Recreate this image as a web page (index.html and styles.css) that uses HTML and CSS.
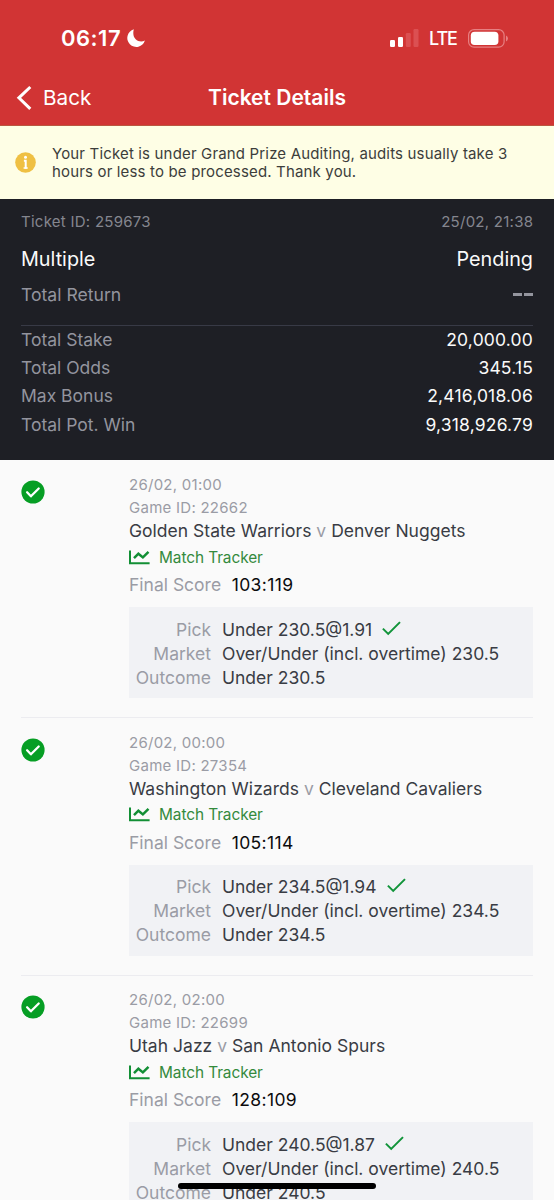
FILE: index.html
```html
<!DOCTYPE html>
<html lang="en">
<head>
<meta charset="utf-8">
<title>Ticket Details</title>
<link rel="stylesheet" href="styles.css">
</head>
<body>
<svg class="defs" width="0" height="0">
  <symbol id="won" viewBox="0 0 24 24"><circle cx="12" cy="12" r="11.6" fill="#069e24"/><path d="M6.1 12.3l3.8 4L17.7 8.5" fill="none" stroke="#fff" stroke-width="2.3" stroke-linecap="round" stroke-linejoin="round"/></symbol>
  <symbol id="chart" viewBox="0 0 21 15"><path d="M1 .6v12.7h19.6" fill="none" stroke="#128f35" stroke-width="2"/><path d="M5 8.2l4.4-4.5 4.5 3.7 5.6-5.5" fill="none" stroke="#128f35" stroke-width="2.5"/></symbol>
  <symbol id="tick" viewBox="0 0 19 15"><path d="M.9 7.6l5.3 5.3L18 1.1" fill="none" stroke="#12943a" stroke-width="2"/></symbol>
</svg>
<div class="screen">
  <header class="top">
    <div class="status">
      <span class="clock">06:17</span>
      <svg class="moon" viewBox="0 0 18 18"><path d="M6.8.3A9 9 0 1 0 17.9 11.6C12 14.5 4.2 10 6.8.3z" fill="#fff"/></svg>
      <svg class="signal" viewBox="0 0 29 18"><rect x="0" y="11" width="5" height="7" rx="1.2" fill="#fff"/><rect x="8" y="8" width="5" height="10" rx="1.2" fill="#fff"/><rect x="15.8" y="4" width="5" height="14" rx="1.2" fill="#db5052"/><rect x="23.5" y="0" width="5" height="18" rx="1.2" fill="#db5052"/></svg>
      <span class="lte">LTE</span>
      <svg class="battery" viewBox="0 0 41 19"><rect x=".6" y=".6" width="35.5" height="17.6" rx="5.5" fill="none" stroke="#e78082" stroke-width="1.2"/><rect x="2.8" y="2.8" width="27.6" height="13.2" rx="3.8" fill="#fff"/><path d="M38 6.4q2 1 2 3t-2 3z" fill="#e78082"/></svg>
    </div>
    <nav class="nav">
      <a class="back"><svg class="chevron" viewBox="0 0 16 26"><path d="M14.3 2L2.9 12.8 14.3 23.8" fill="none" stroke="#fff" stroke-width="3"/></svg><span>Back</span></a>
      <h1 class="title">Ticket Details</h1>
    </nav>
  </header>
  <div class="notice">
    <svg class="info" viewBox="0 0 21 21"><circle cx="10.5" cy="10.5" r="10.3" fill="#efc043"/><circle cx="10.5" cy="5.3" r="1.5" fill="#fff"/><path d="M8.9 8.8h1.8v8" fill="none" stroke="#fff" stroke-width="2"/><path d="M8.6 16h4.1" stroke="#fff" stroke-width="1.5"/></svg>
    <p class="notice-text">Your Ticket is under Grand Prize Auditing, audits usually take 3<br>hours or less to be processed. Thank you.</p>
  </div>
  <section class="summary">
    <div class="row meta"><span>Ticket ID: 259673</span><span class="when">25/02, 21:38</span></div>
    <div class="row kind"><span>Multiple</span><span class="state">Pending</span></div>
    <div class="row return"><span class="label">Total Return</span><span class="dashes"><i></i><i></i></span></div>
    <div class="totals">
      <div class="row"><span class="label">Total Stake</span><span class="value">20,000.00</span></div>
      <div class="row"><span class="label">Total Odds</span><span class="value">345.15</span></div>
      <div class="row"><span class="label">Max Bonus</span><span class="value">2,416,018.06</span></div>
      <div class="row"><span class="label">Total Pot. Win</span><span class="value">9,318,926.79</span></div>
    </div>
  </section>
  <main class="games">
    <article class="game">
      <svg class="won"><use href="#won"/></svg>
      <div class="info-col">
        <div class="small">26/02, 01:00</div>
        <div class="small">Game ID: 22662</div>
        <div class="teams">Golden State Warriors <span class="v">v</span> Denver Nuggets</div>
        <div class="tracker"><svg class="chart"><use href="#chart"/></svg><span>Match Tracker</span></div>
        <div class="final"><span class="final-label">Final Score</span><span class="score">103:119</span></div>
        <dl class="bet">
          <dt>Pick</dt><dd>Under 230.5@1.91<svg class="tick"><use href="#tick"/></svg></dd>
          <dt>Market</dt><dd>Over/Under (incl. overtime) 230.5</dd>
          <dt>Outcome</dt><dd>Under 230.5</dd>
        </dl>
      </div>
    </article>
    <article class="game">
      <svg class="won"><use href="#won"/></svg>
      <div class="info-col">
        <div class="small">26/02, 00:00</div>
        <div class="small">Game ID: 27354</div>
        <div class="teams">Washington Wizards <span class="v">v</span> Cleveland Cavaliers</div>
        <div class="tracker"><svg class="chart"><use href="#chart"/></svg><span>Match Tracker</span></div>
        <div class="final"><span class="final-label">Final Score</span><span class="score">105:114</span></div>
        <dl class="bet">
          <dt>Pick</dt><dd>Under 234.5@1.94<svg class="tick"><use href="#tick"/></svg></dd>
          <dt>Market</dt><dd>Over/Under (incl. overtime) 234.5</dd>
          <dt>Outcome</dt><dd>Under 234.5</dd>
        </dl>
      </div>
    </article>
    <article class="game">
      <svg class="won"><use href="#won"/></svg>
      <div class="info-col">
        <div class="small">26/02, 02:00</div>
        <div class="small">Game ID: 22699</div>
        <div class="teams">Utah Jazz <span class="v">v</span> San Antonio Spurs</div>
        <div class="tracker"><svg class="chart"><use href="#chart"/></svg><span>Match Tracker</span></div>
        <div class="final"><span class="final-label">Final Score</span><span class="score">128:109</span></div>
        <dl class="bet">
          <dt>Pick</dt><dd>Under 240.5@1.87<svg class="tick"><use href="#tick"/></svg></dd>
          <dt>Market</dt><dd>Over/Under (incl. overtime) 240.5</dd>
          <dt>Outcome</dt><dd>Under 240.5</dd>
        </dl>
      </div>
    </article>
  </main>
  <div class="home-bar"></div>
</div>
</body>
</html>
```
FILE: styles.css
```css
* { box-sizing: border-box; }
body { margin: 0; font-family: Inter, "Liberation Sans", sans-serif; color: #393c44; }
svg { display: block; flex: none; }
.defs { position: absolute; }
.screen { position: relative; height: 1200px; overflow: hidden; background: #fafafa; white-space: nowrap; }

.top { height: 126px; background: #d13434; color: #fff; border-bottom: 1px solid #bb5740; }
.status { display: flex; align-items: center; height: 76px; padding-left: 61px; }
.clock { font-size: 22px; font-weight: 600; width: 66px; letter-spacing: .5px; }
.moon { width: 18px; height: 18px; }
.signal { width: 29px; height: 18px; margin-left: 245px; }
.lte { font-size: 18px; font-weight: 500; margin-left: 10px; width: 29px; letter-spacing: -1.1px; }
.battery { width: 41px; height: 19px; margin-left: 10px; }
.nav { display: grid; grid-template-columns: 1fr auto 1fr; align-items: center; height: 43px; }
.back { display: flex; align-items: center; gap: 11px; padding-left: 16px; font-size: 20.7px; }
.chevron { width: 16px; height: 26px; }
.title { margin: 0; font-size: 21px; font-weight: 600; }

.notice { display: flex; align-items: center; height: 73px; padding-left: 15px; background: #fefee5; }
.info { width: 21px; height: 21px; }
.notice-text { margin: 0 0 0 16px; font-size: 15px; line-height: 18px; letter-spacing: .16px; color: #3c3d3b; }

.summary { height: 261px; padding: 8px 21px 0; background: #1e1f25; color: #fafafa; }
.row { display: flex; justify-content: space-between; align-items: center; }
.meta { height: 28px; font-size: 15px; letter-spacing: .26px; color: #85868f; }
.when { margin-right: -.26px; }
.kind { height: 46px; padding-top: 2px; font-size: 19.8px; }
.return { height: 26px; font-size: 17.6px; }
.label { color: #93949e; }
.dashes { display: flex; gap: 2px; padding-top: 1px; }
.dashes i { width: 9px; height: 3px; background: #94959e; }
.totals { margin-top: 18px; border-top: 1px solid #383a46; font-size: 17.5px; }
.totals .row { height: 28.3px; line-height: 21px; padding-bottom: 2px; }
.value { letter-spacing: .17px; }

.game { display: flex; height: 257.5px; margin: 0 21px; border-bottom: 1.5px solid #ececf0; }
.games { padding-top: .5px; }
.won { width: 24px; height: 24px; margin-top: 19.5px; }
.info-col { margin-left: 84px; padding-top: 12.5px; width: 404px; }
.small { height: 23px; line-height: 23px; font-size: 15px; letter-spacing: .26px; color: #9a9ca5; }
.teams { height: 24px; line-height: 23px; font-size: 17.5px; letter-spacing: .02px; }
.v { color: #9a9ca5; }
.tracker { display: flex; align-items: center; gap: 9px; height: 28px; font-size: 15.4px; letter-spacing: -.08px; color: #348a3d; }
.chart { width: 21px; height: 15px; }
.final { display: flex; gap: 10.5px; height: 27px; line-height: 27px; font-size: 17.5px; }
.final-label { color: #9a9ca5; }
.score { color: #0b0b0d; letter-spacing: .4px; }
.bet { display: grid; grid-template-columns: 82px 1fr; column-gap: 11px; grid-auto-rows: 24px; align-content: start; height: 91px; margin: 9px 0 0; padding-top: 10.5px; background: #f1f2f5; font-size: 17.5px; line-height: 24px; }
.bet dt { text-align: right; color: #9a9ca5; }
.bet dd { display: flex; align-items: center; gap: 10px; margin: 0; }
.tick { width: 19px; height: 15px; margin-top: -3px; }
.home-bar { position: absolute; left: 178px; top: 1183px; width: 198px; height: 6px; border-radius: 3px; background: #000; }
```
